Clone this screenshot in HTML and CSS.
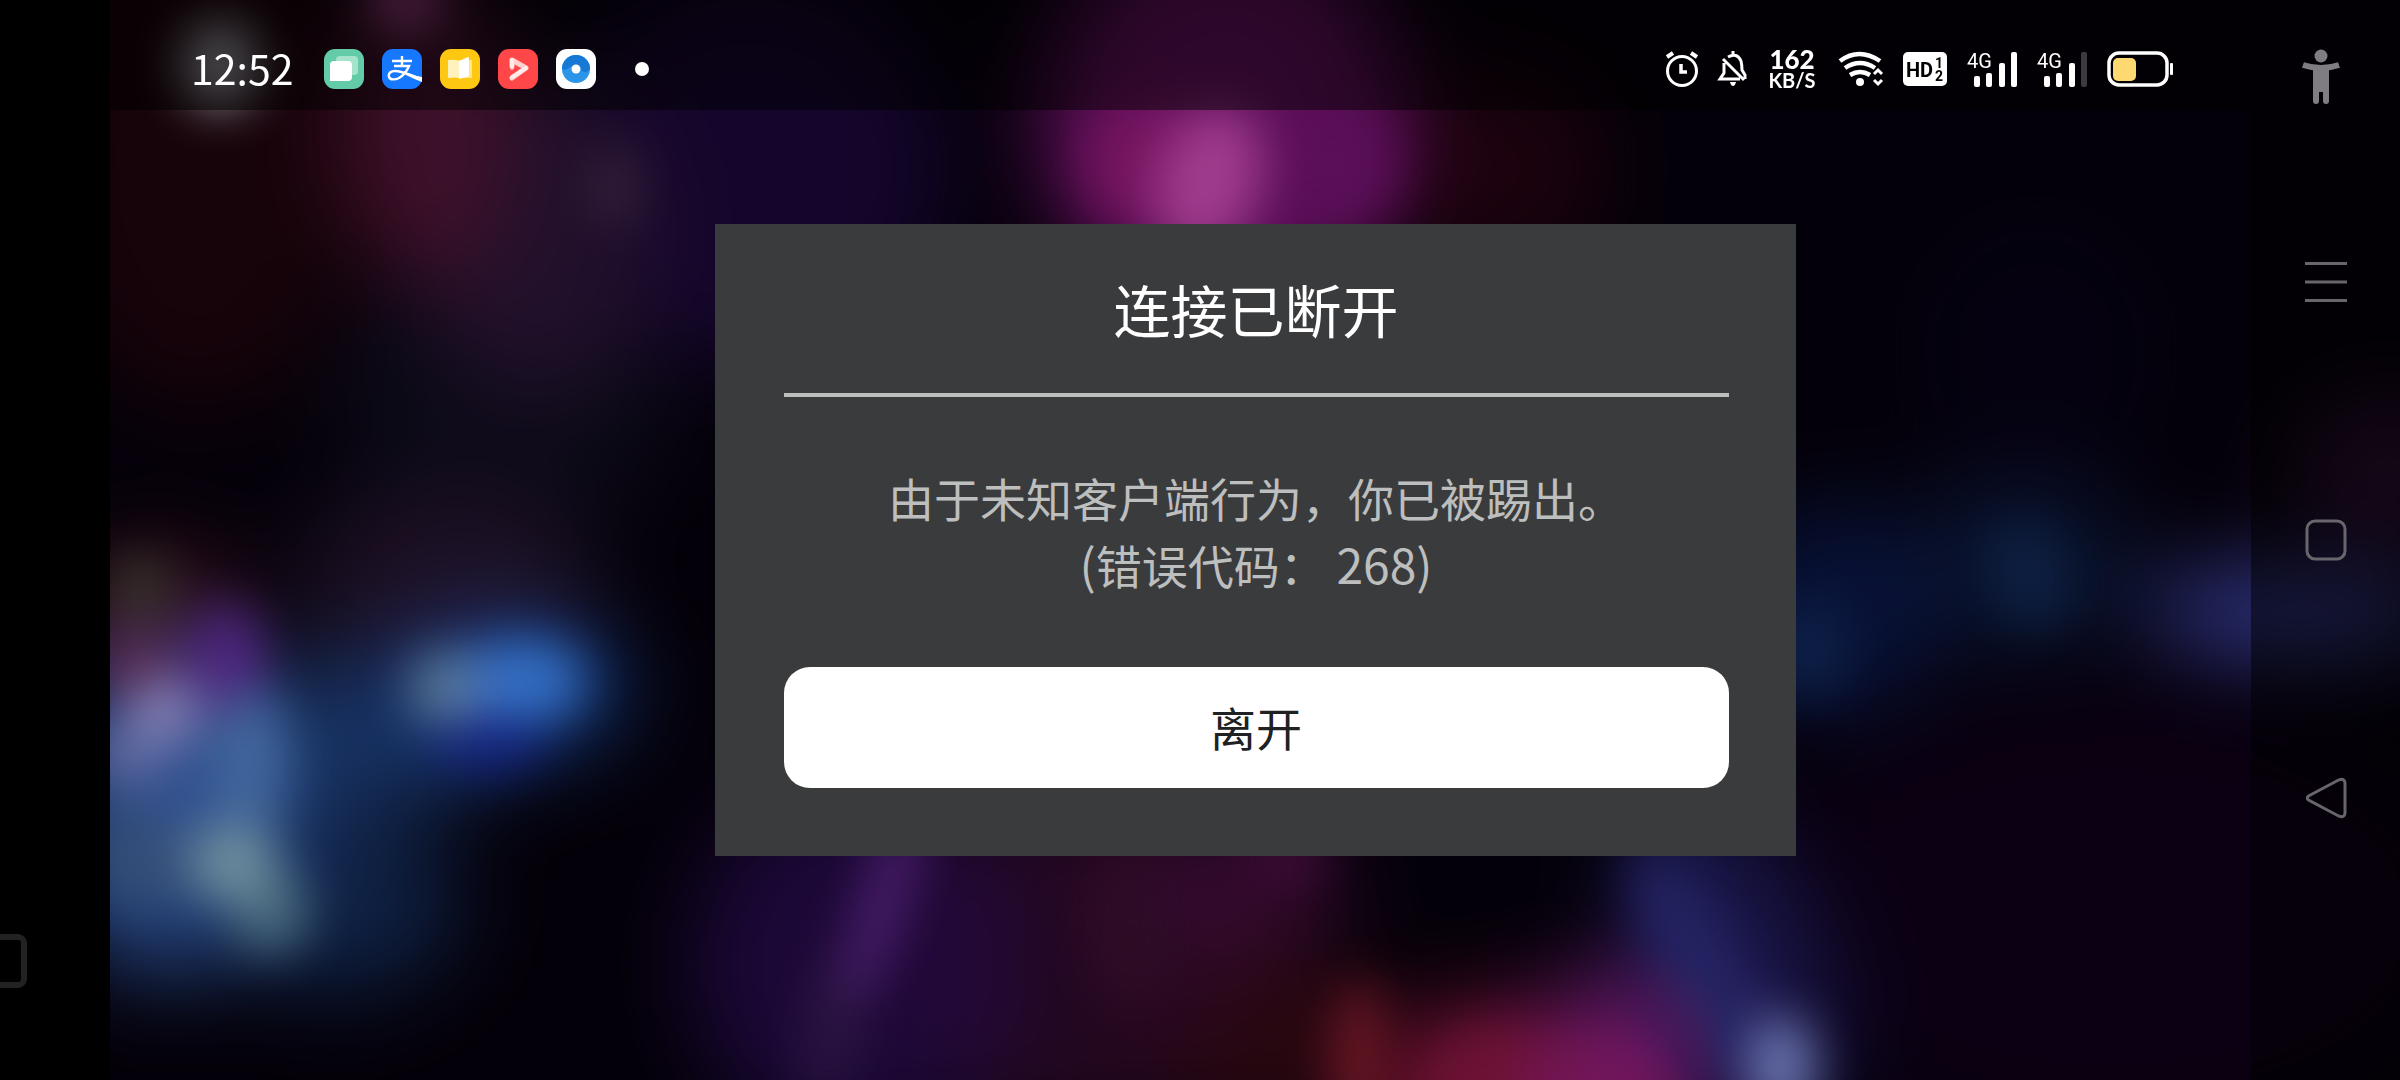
FILE: index.html
```
<!DOCTYPE html>
<html lang="zh-CN">
<head>
    <meta charset="UTF-8">
    <meta name="viewport" content="width=device-width, initial-scale=1">
    <title>连接已断开</title>
    <link rel="stylesheet" href="styles.css">
</head>
<body>
    <div class="screen">
        <div class="edge">
            <svg class="edge-mark" viewBox="0 0 28 54" aria-hidden="true">
                <rect x="-30" y="3" width="54" height="48" rx="6" fill="none" stroke="#222" stroke-width="6"/>
            </svg>
        </div>

        <div class="stage">
            <svg class="wallpaper" viewBox="72 0 1496 706" preserveAspectRatio="none" aria-hidden="true">
                <defs>
                    <filter id="soft" x="-20%" y="-20%" width="140%" height="140%" color-interpolation-filters="sRGB"><feGaussianBlur stdDeviation="16"/></filter>
                    <filter id="wide" x="-20%" y="-20%" width="140%" height="140%" color-interpolation-filters="sRGB"><feGaussianBlur stdDeviation="30"/></filter>
                </defs>
                <rect x="72" width="1496" height="706" fill="#040009"/>
                <!-- large dim haze -->
                <g class="haze" filter="url(#wide)">
                    <ellipse cx="130" cy="100" rx="110" ry="170" fill="#17030a"/>
                    <ellipse cx="280" cy="80" rx="56" ry="110" fill="#3f102a"/>
                    <ellipse cx="350" cy="150" rx="80" ry="110" fill="#21102a"/>
                    <ellipse cx="490" cy="110" rx="130" ry="130" fill="#15052c"/>
                    <ellipse cx="330" cy="260" rx="110" ry="90" fill="#0c0a18"/>
                    <ellipse cx="290" cy="380" rx="100" ry="60" fill="#1d1024"/>
                    <ellipse cx="100" cy="405" rx="60" ry="46" fill="#3c1424"/>
                    <ellipse cx="800" cy="80" rx="120" ry="130" fill="#5c0e58"/>
                    <ellipse cx="970" cy="110" rx="80" ry="70" fill="#1c020e"/>
                    <ellipse cx="110" cy="530" rx="86" ry="110" fill="#24427c"/>
                    <ellipse cx="230" cy="480" rx="110" ry="50" fill="#16305e"/>
                    <ellipse cx="220" cy="590" rx="80" ry="60" fill="#0f2144"/>
                    <ellipse cx="330" cy="450" rx="80" ry="46" fill="#153878"/>
                    <ellipse cx="560" cy="630" rx="110" ry="120" fill="#1c0838"/>
                    <ellipse cx="690" cy="630" rx="110" ry="120" fill="#22071f"/>
                    <ellipse cx="800" cy="580" rx="80" ry="50" fill="#340a2e"/>
                    <ellipse cx="820" cy="680" rx="90" ry="60" fill="#28070f"/>
                    <ellipse cx="980" cy="715" rx="90" ry="60" fill="#6a1030"/>
                    <ellipse cx="1060" cy="700" rx="60" ry="70" fill="#5c1660"/>
                    <ellipse cx="1130" cy="630" rx="60" ry="120" fill="#181648" transform="rotate(-20 1130 630)"/>
                    <ellipse cx="1380" cy="600" rx="240" ry="150" fill="#0b0013"/>
                    <ellipse cx="1200" cy="400" rx="70" ry="70" fill="#081238"/>
                    <ellipse cx="1320" cy="370" rx="80" ry="60" fill="#09122c"/>
                    <ellipse cx="1330" cy="230" rx="90" ry="100" fill="#050110"/>
                    <ellipse cx="1500" cy="400" rx="100" ry="28" fill="#353b90"/>
                    <ellipse cx="1560" cy="310" rx="60" ry="50" fill="#2e0f32"/>
                </g>
                <!-- brighter spots -->
                <g class="haze" filter="url(#soft)">
                    <ellipse cx="265" cy="0" rx="24" ry="20" fill="#96407e"/>
                    <ellipse cx="144" cy="42" rx="24" ry="28" fill="#9c9ea4"/>
                    <ellipse cx="402" cy="122" rx="14" ry="24" fill="#38263e"/>
                    <ellipse cx="752" cy="105" rx="44" ry="42" fill="#74145f"/>
                    <ellipse cx="790" cy="118" rx="34" ry="50" fill="#a03c8c" transform="rotate(18 790 118)"/>
                    <ellipse cx="870" cy="108" rx="42" ry="40" fill="#5a0f58"/>
                    <ellipse cx="92" cy="383" rx="16" ry="18" fill="#36402c"/>
                    <ellipse cx="148" cy="430" rx="24" ry="34" fill="#502480"/>
                    <ellipse cx="90" cy="436" rx="20" ry="26" fill="#5a2850"/>
                    <ellipse cx="108" cy="465" rx="24" ry="22" fill="#8682b8"/>
                    <ellipse cx="82" cy="494" rx="24" ry="20" fill="#606aa0"/>
                    <ellipse cx="164" cy="496" rx="24" ry="46" fill="#42689e"/>
                    <ellipse cx="120" cy="516" rx="30" ry="30" fill="#30508e"/>
                    <ellipse cx="90" cy="560" rx="30" ry="34" fill="#344e76"/>
                    <ellipse cx="152" cy="564" rx="30" ry="26" fill="#70909e"/>
                    <ellipse cx="177" cy="596" rx="24" ry="26" fill="#4c6e80"/>
                    <ellipse cx="292" cy="450" rx="24" ry="24" fill="#5c7c96"/>
                    <ellipse cx="342" cy="445" rx="40" ry="26" fill="#3470c6"/>
                    <ellipse cx="318" cy="486" rx="36" ry="14" fill="#141e84"/>
                    <ellipse cx="577" cy="590" rx="14" ry="70" fill="#4e2070" transform="rotate(18 577 590)"/>
                    <ellipse cx="545" cy="670" rx="20" ry="50" fill="#2a1540" transform="rotate(10 545 670)"/>
                    <ellipse cx="840" cy="560" rx="26" ry="18" fill="#400d3a"/>
                    <ellipse cx="740" cy="610" rx="30" ry="50" fill="#2e0c26"/>
                    <ellipse cx="888" cy="690" rx="16" ry="50" fill="#6c1824"/>
                    <ellipse cx="980" cy="712" rx="46" ry="40" fill="#6c1234"/>
                    <ellipse cx="1040" cy="716" rx="50" ry="36" fill="#721654"/>
                    <ellipse cx="1110" cy="630" rx="24" ry="84" fill="#242464" transform="rotate(-26 1110 630)"/>
                    <ellipse cx="1164" cy="698" rx="22" ry="34" fill="#6c76b0"/>
                    <ellipse cx="1182" cy="425" rx="26" ry="32" fill="#0e2048"/>
                    <ellipse cx="1325" cy="375" rx="26" ry="36" fill="#0e2042" transform="rotate(-20 1325 375)"/>
                </g>
            </svg>

            <header class="statusbar">
                <time class="clock">12:52</time>
                <div class="apps">
                    <svg viewBox="0 0 40 40" aria-hidden="true">
                        <rect width="40" height="40" rx="11" fill="#63cba8"/>
                        <rect x="12" y="7" width="22" height="19" rx="4" fill="#a5e3cc"/>
                        <path d="M10 12h14q4 0 4 4v12q0 4-4 4H6V16q0-4 4-4z" fill="#fff"/>
                    </svg>
                    <svg viewBox="0 0 40 40" aria-hidden="true">
                        <rect width="40" height="40" rx="11" fill="#1677ff"/>
                        <path d="M20 7v9M10 12h20M12 17h15c-2 5-5 9-10 12-4 2-9 2-10-1-1-4 2-6 6-6 8 0 14 4 27 8" fill="none" stroke="#fff" stroke-width="2.4"/>
                        <path d="M25 24q8 3 15 4v5q-8-3-16-7z" fill="#fff"/>
                    </svg>
                    <svg viewBox="0 0 40 40" aria-hidden="true">
                        <rect width="40" height="40" rx="11" fill="#fec712"/>
                        <path d="M19 11h13v18H19z" fill="#ffe787"/>
                        <path d="M8 11q6-1 12 1v17q-6-1-12 0z" fill="#fff2bd"/>
                        <path d="M19 12l9-4q1 0 1 2v16q0 2-2 2l-8 2z" fill="#fff"/>
                    </svg>
                    <svg viewBox="0 0 40 40" aria-hidden="true">
                        <rect width="40" height="40" rx="11" fill="#ff4648"/>
                        <path d="M14 17v-6l14 8-14 10" fill="none" stroke="#ffd0cd" stroke-width="5" stroke-linecap="round" stroke-linejoin="round"/>
                        <path d="M14 11v8M14 28l14-9" stroke="#fff" stroke-width="4" stroke-linecap="round" opacity=".6"/>
                    </svg>
                    <svg viewBox="0 0 40 40" aria-hidden="true">
                        <rect width="40" height="40" rx="11" fill="#fff"/>
                        <circle cx="20" cy="20" r="14" fill="#2d95e8"/>
                        <path d="M6 20a14 14 0 0 1 28 0q-3 5-8 2-6-8-12-4-4 4-8 2z" fill="#1679d6"/>
                        <circle cx="20" cy="20" r="4.500" fill="#fff"/>
                    </svg>
                </div>
                <span class="more-dot"></span>

                <div class="tray">
                    <svg class="alarm" viewBox="0 0 34 36" aria-hidden="true">
                        <g fill="none" stroke="#fff" stroke-width="3">
                            <circle cx="17" cy="20" r="14.500"/>
                            <path d="M16 13v8h6" stroke-width="3.500"/>
                            <path d="M2 6l6-4M32 6l-6-4" stroke-width="4"/>
                        </g>
                    </svg>
                    <svg class="bell" viewBox="0 0 28 36" aria-hidden="true">
                        <g fill="none" stroke="#fff" stroke-width="3">
                            <path d="M9 6q9-5 13 4 1 4 1 9l3 5v4M14 0v4M5 12v10l-4 6h20M4 8l21 21"/>
                        </g>
                        <path d="M11 31h6q-1 4-3 4t-3-4z" fill="#fff"/>
                    </svg>
                    <div class="speed"><b>162</b><span>KB/S</span></div>
                    <svg class="wifi" viewBox="0 0 46 36" aria-hidden="true">
                        <g fill="none" stroke="#fff" stroke-width="4.500">
                            <path d="M3 10q19-14 40 0M8 17q15-10 30 0M13 24q10-6 20 0"/>
                            <path d="M37 23l4-4 4 4M37 29l4 4 4-4" stroke-width="3"/>
                        </g>
                        <circle cx="23" cy="31" r="4" fill="#fff"/>
                    </svg>
                    <svg class="hd" viewBox="0 0 44 36" aria-hidden="true">
                        <rect y="1" width="44" height="34" rx="5" fill="#fff"/>
                        <text class="hd-text" x="3" y="26">HD</text>
                        <text class="hd-num" x="32" y="17">1</text>
                        <text class="hd-num" x="32" y="30">2</text>
                    </svg>
                    <svg class="signal" viewBox="0 0 50 36" aria-hidden="true">
                        <text class="net" x="0" y="17">4G</text>
                        <g fill="#fff">
                            <rect x="7" y="25" width="6" height="11" rx="2"/>
                            <rect x="19" y="22" width="6" height="14" rx="2"/>
                            <rect x="32" y="12" width="6" height="24" rx="2"/>
                            <rect x="44" y="1" width="6" height="35" rx="2"/>
                        </g>
                    </svg>
                    <svg class="signal" viewBox="0 0 50 36" aria-hidden="true">
                        <text class="net" x="0" y="17">4G</text>
                        <g fill="#fff">
                            <rect x="7" y="25" width="6" height="11" rx="2"/>
                            <rect x="19" y="22" width="6" height="14" rx="2"/>
                            <rect x="32" y="12" width="6" height="24" rx="2"/>
                            <rect x="44" y="1" width="6" height="35" rx="2" fill="#3b3a3e"/>
                        </g>
                    </svg>
                    <svg class="battery" viewBox="0 0 66 36" aria-hidden="true">
                        <rect x="2" y="2" width="58" height="32" rx="10" fill="none" stroke="#fff" stroke-width="3.500"/>
                        <rect x="6" y="7" width="23" height="23" rx="5" fill="#fed971"/>
                        <rect x="63" y="12" width="3" height="12" rx="1" fill="#fff"/>
                    </svg>
                </div>
            </header>

            <nav class="sidenav">
                <button type="button" class="bright" aria-label="无障碍">
                    <svg viewBox="0 0 42 56" aria-hidden="true">
                        <circle cx="21" cy="7" r="6.500" fill="currentColor"/>
                        <path d="M3 16q18 6 36 0" fill="none" stroke="currentColor" stroke-width="6"/>
                        <path d="M13 18h16v34q0 3-3 3t-3-3V43h-4v9q0 3-3 3t-3-3z" fill="currentColor"/>
                    </svg>
                </button>
                <button type="button" aria-label="菜单">
                    <svg viewBox="0 0 42 42" aria-hidden="true">
                        <path d="M0 2.500h42M0 21h42M0 39.500h42" stroke="currentColor" stroke-width="3"/>
                    </svg>
                </button>
                <button type="button" aria-label="主页">
                    <svg viewBox="0 0 42 42" aria-hidden="true">
                        <rect x="2" y="2" width="38" height="38" rx="8" fill="none" stroke="currentColor" stroke-width="3"/>
                    </svg>
                </button>
                <button type="button" aria-label="返回">
                    <svg viewBox="0 0 42 42" aria-hidden="true">
                        <path d="M3.500 19L34 2.800q5.500-2 6 3v30.400q-.5 5-6 3L3.500 23q-2.500-2 0-4z" fill="none" stroke="currentColor" stroke-width="3"/>
                    </svg>
                </button>
            </nav>

            <div class="dialog" role="alertdialog" aria-labelledby="title" aria-describedby="message">
                <h1 id="title">连接已断开</h1>
                <hr>
                <p id="message">由于未知客户端行为，你已被踢出。<br><span class="latin">(</span>错误代码：<span class="latin"> 268)</span></p>
                <button type="button" class="leave">离开</button>
            </div>
        </div>
    </div>
</body>
</html>
```

FILE: styles.css
```
* {
    box-sizing: border-box;
}

body {
    margin: 0;
    background: #000;
    color: #fff;
    font-family: "Noto Sans CJK SC", "Noto Sans", sans-serif;
}

svg {
    display: block;
}

.screen {
    display: flex;
    min-height: 100vh;
    overflow: hidden;
}

.edge {
    display: flex;
    flex: 0 0 110px;
    align-items: flex-end;
    padding-bottom: 92px;
}

.edge-mark {
    width: 28px;
    height: 54px;
}

/* wallpaper, bars and dialog share one grid */
.stage {
    position: relative;
    display: grid;
    flex: 1;
    grid-template-columns: 1fr 149px;
    grid-template-rows: 110px 1fr;
    overflow: hidden;
}

.wallpaper {
    position: absolute;
    width: 100%;
    height: 100%;
}

.haze,
.haze ellipse {
    mix-blend-mode: lighten;
}

.statusbar {
    grid-column: 1;
    grid-row: 1;
    z-index: 1;
    display: flex;
    align-items: center;
    padding: 28px 78px 0 81px;
    background: rgba(0, 0, 0, 0.5);
}

.clock {
    padding-bottom: 4px;
    font-size: 41px;
    line-height: 42px;
}

.apps {
    display: flex;
    gap: 18px;
    margin-left: 31px;
}

.apps svg {
    width: 40px;
    height: 40px;
}

.more-dot {
    width: 14px;
    height: 14px;
    margin-left: 39px;
    border-radius: 50%;
    background: #fff;
}

.tray {
    display: flex;
    align-items: center;
    gap: 20px;
    margin-left: auto;
}

.tray svg {
    height: 36px;
    overflow: visible;
}

.alarm {
    width: 34px;
}

.bell {
    width: 28px;
}

.wifi {
    width: 46px;
}

.hd {
    width: 44px;
}

.signal {
    width: 50px;
}

.battery {
    width: 66px;
}

.speed {
    display: flex;
    flex-direction: column;
    align-items: center;
    width: 50px;
    font-family: Lato, sans-serif;
    font-weight: 700;
}

.speed b {
    font-size: 26px;
    line-height: 22px;
}

.speed span {
    font-size: 20px;
    line-height: 20px;
}

.hd-text {
    fill: #000;
    font: bold 20px Roboto, sans-serif;
}

.hd-num {
    fill: #000;
    font: bold 14px Roboto, sans-serif;
}

.net {
    fill: #fff;
    font: 20px Roboto, sans-serif;
}

.sidenav {
    grid-column: 2;
    grid-row: 1 / 3;
    z-index: 1;
    display: grid;
    grid-template-rows: 1fr 258px 258px 258px 1fr;
    background: rgba(0, 0, 0, 0.5);
}

.sidenav button {
    display: flex;
    align-items: center;
    justify-content: center;
    padding: 0;
    border: 0;
    background: none;
    color: #68656c;
    cursor: pointer;
}

.sidenav .bright {
    padding-right: 10px;
    color: #7f7d82;
}

.sidenav svg {
    width: 42px;
}

.dialog {
    grid-column: 1 / 3;
    grid-row: 1 / 3;
    z-index: 2;
    place-self: center;
    width: 1081px;
    max-width: 100%;
    padding: 46px 67px 68px 69px;
    background: #3a3b3d;
    text-align: center;
}

.dialog h1 {
    margin: 0 0 47px;
    font-size: 57px;
    font-weight: 400;
    line-height: 76px;
}

.dialog hr {
    height: 4px;
    margin: 0 0 67px;
    border: 0;
    background: #bdbebe;
}

.dialog p {
    margin: 0 0 69px;
    color: #bdbebe;
    font-size: 46px;
    line-height: 67px;
}

.latin {
    font-size: 48px;
    line-height: 1;
}

.leave {
    display: block;
    width: 100%;
    height: 121px;
    padding: 0 0 4px;
    border: 0;
    border-radius: 26px;
    background: #fff;
    color: #202122;
    font-family: inherit;
    font-size: 46px;
    cursor: pointer;
}
```
